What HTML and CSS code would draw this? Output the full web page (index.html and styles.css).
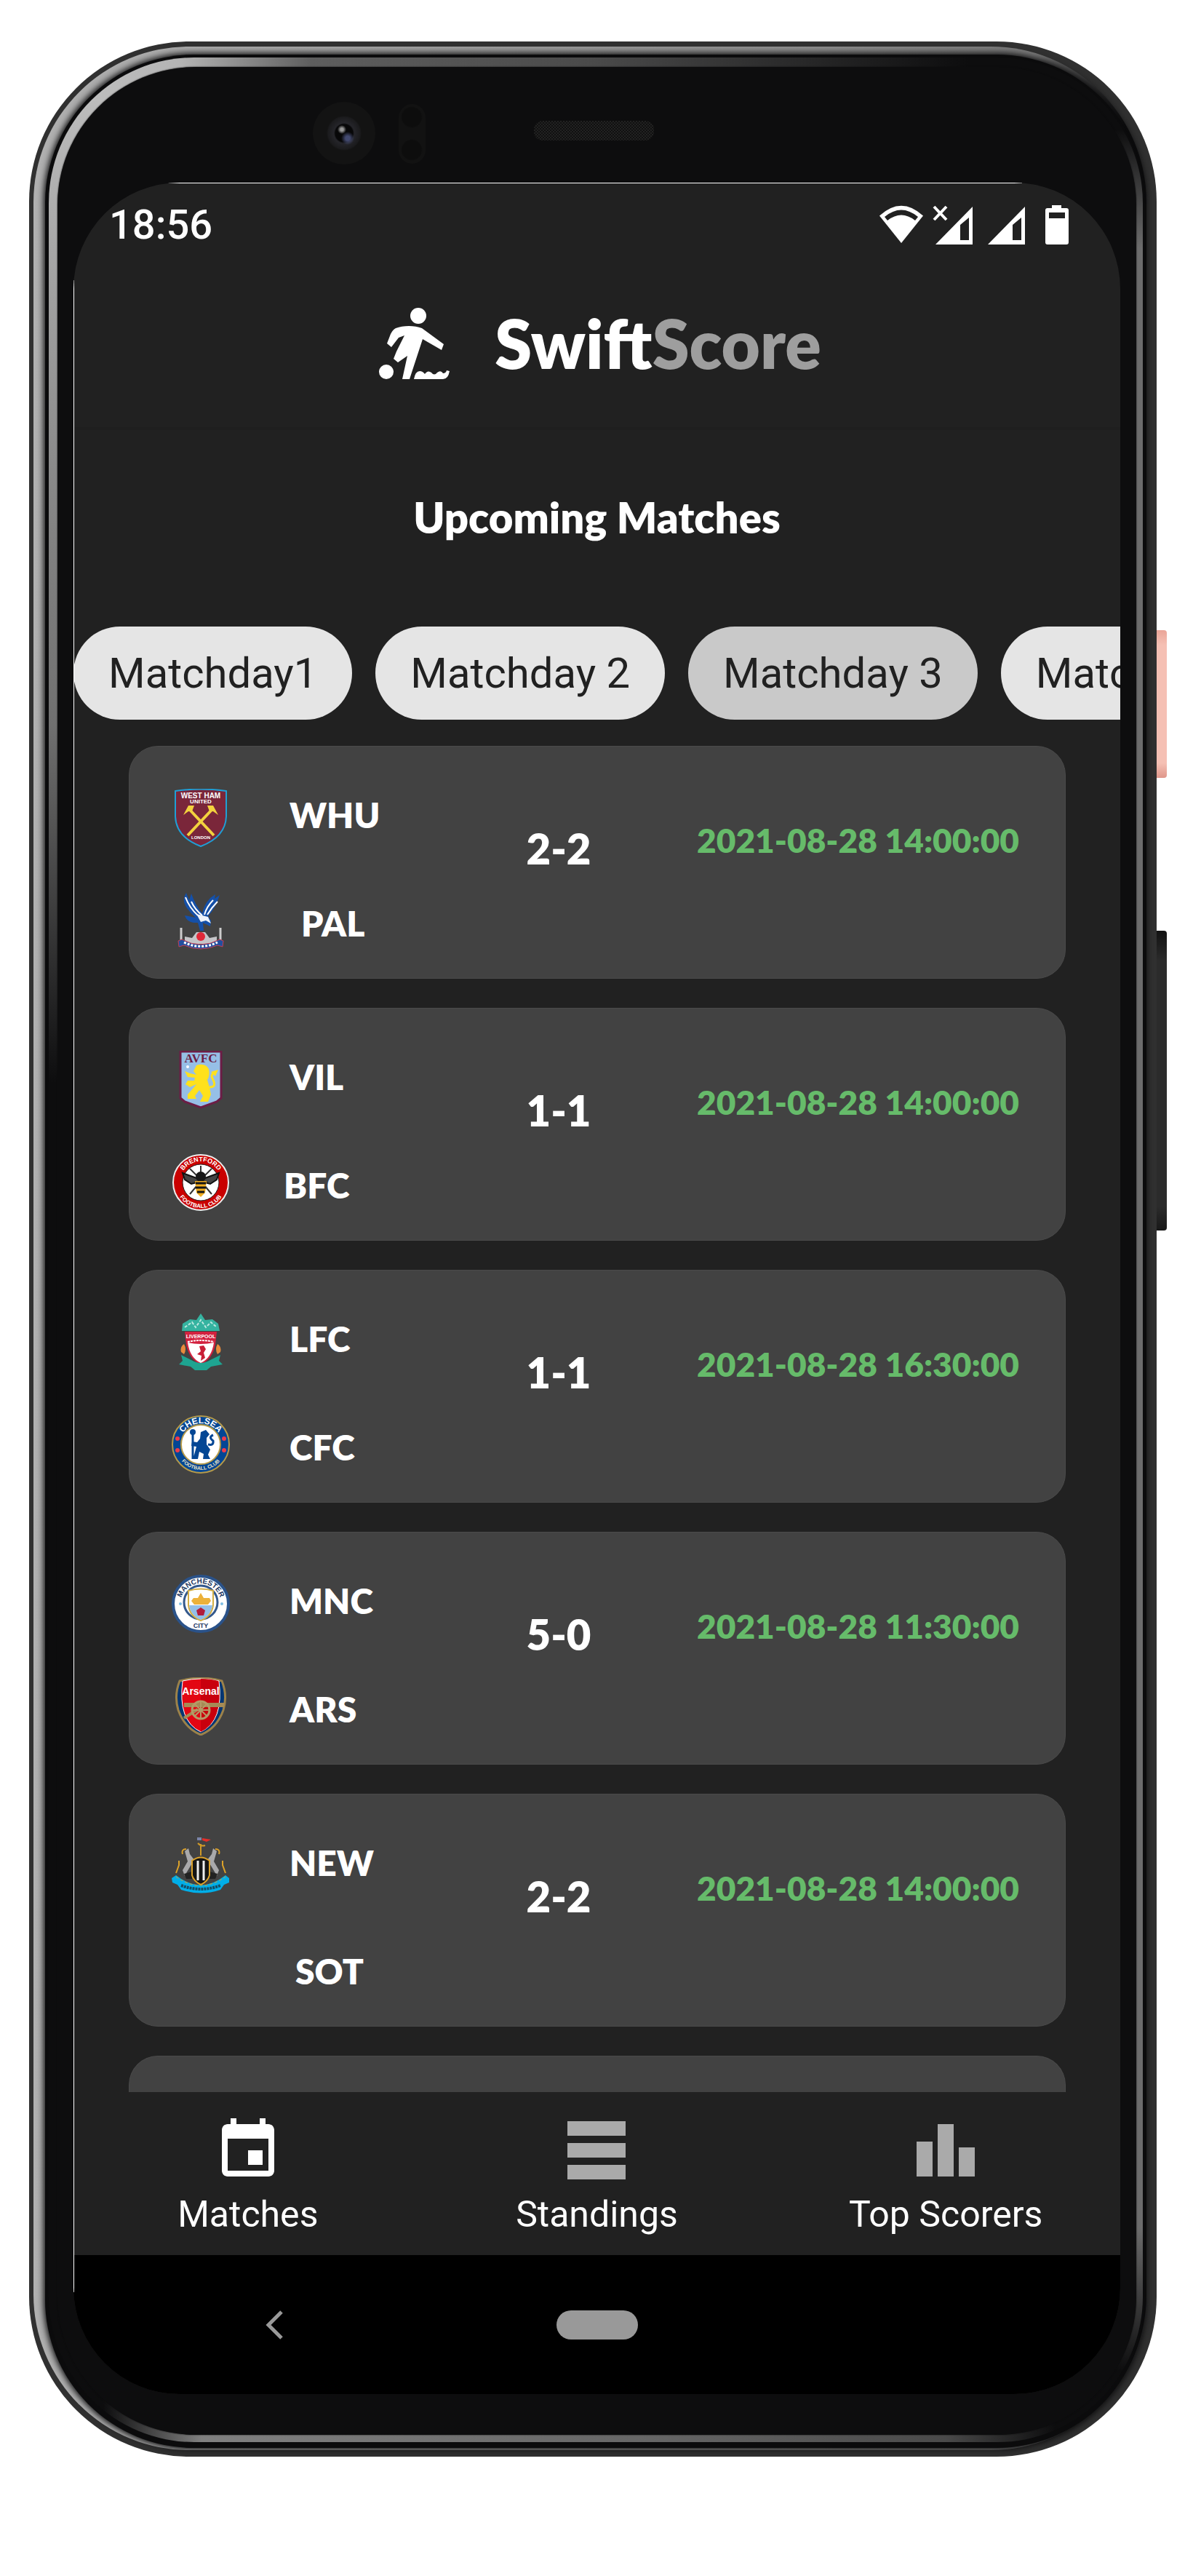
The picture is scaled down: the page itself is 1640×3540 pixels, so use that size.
FILE: index.html
```html
<!DOCTYPE html>
<html lang="en">
<head>
<meta charset="utf-8">
<title>SwiftScore</title>
<link rel="stylesheet" href="styles.css">
</head>
<body>
<div class="device">
  <span class="ring ring-rim"></span>
  <span class="ring ring-gap"></span>
  <span class="ring ring-shine"></span>
  <span class="ring ring-bezel"></span>
  <span class="side-button side-button-power"></span>
  <span class="side-button side-button-volume"></span>
  <span class="camera"></span>
  <span class="sensor"></span>
  <span class="speaker"></span>

  <div class="screen">
    <div class="status-bar">
      <span class="clock">18:56</span>
      <svg class="status-icons" width="260" height="54" viewBox="0 0 260 54" fill="#fff" aria-hidden="true">
        <path d="M0 14.500Q30-13 60 14.500L30 52Z"/>
        <path d="M7 16Q30-3 53 16L49 21Q30 6 11 21Z" fill="#212121"/>
        <path d="M75 2l17 18M92 2l-17 18" stroke="#fff" stroke-width="4"/>
        <path fill-rule="evenodd" d="M77 54L128 2v52ZM111 27v21h12V17Z"/>
        <path fill-rule="evenodd" d="M149 54L200 2v52ZM183 27v21h12V17Z"/>
        <path fill-rule="evenodd" d="M237 0h13v4h7q3 0 3 3v44q0 3-3 3h-26q-3 0-3-3V7q0-3 3-3h6ZM233 10v8h22v-8Z"/>
      </svg>
    </div>

    <header class="app-bar">
      <svg class="brand-icon" width="98" height="98" viewBox="0 0 98 98" fill="#fff" aria-hidden="true">
        <circle cx="55" cy="11" r="11"/>
        <circle cx="11" cy="88" r="10"/>
        <path d="M24 28Q32 25 42 25Q52 25 60 28L90 50L87 58L61 43L43 98H33L40 66L27 75L21 70L25 60L36 38L28 41L18 54L12 49L17 36Q20 30 24 28Z"/>
        <path d="M49 98q2-11 8-11 4 0 7 4 4-6 9-2 4 5 8 0 5-4 8 1 4 0 5-4l4 1q-2 11-9 11z"/>
      </svg>
      <h1 class="brand">Swift<span class="brand-dim">Score</span></h1>
    </header>

    <main>
      <h2 class="page-title">Upcoming Matches</h2>
      <div class="chips">
        <button class="chip" type="button">Matchday1</button>
        <button class="chip" type="button">Matchday 2</button>
        <button class="chip chip-selected" type="button">Matchday 3</button>
        <button class="chip" type="button">Matchday 4</button>
      </div>

      <div class="matches">
        <article class="match">
          <div class="teams">
            <div class="team">
              <svg class="crest" viewBox="0 0 80 80" aria-hidden="true">
                <path d="M5 3Q40-2 75 3V38Q74 66 40 79Q6 66 5 38Z" fill="#7a263a" stroke="#1f9fd6" stroke-width="2"/>
                <path d="M25 29L58 64M55 29L22 64" stroke="#f3d23e" stroke-width="4"/>
                <path d="M16 36L23 23H31L28 31L23 31ZM64 36L57 23H49L52 31L57 31Z" fill="#f3d23e"/>
                <text x="40" y="13" text-anchor="middle" class="crest-text" font-size="10" fill="#fff">WEST HAM</text>
                <text x="40" y="20" text-anchor="middle" class="crest-text" font-size="8" fill="#fff">UNITED</text>
                <text x="40" y="69" text-anchor="middle" class="crest-text" font-size="6" fill="#fff">LONDON</text>
              </svg>
              <span class="name">WHU</span>
            </div>
            <div class="team">
              <svg class="crest" viewBox="0 0 80 80" aria-hidden="true">
                <path d="M20 2Q13 12 21 23Q26 30 33 36L18 33Q20 41 30 43L36 43L39 54H44L43 43L53 48L54 40L50 34Q60 24 66 5L59 10L60 4Q46 12 42 30Q33 20 27 3L24 12Z" fill="#1550a8"/>
                <path d="M19 8Q24 22 36 33M27 14Q32 25 42 33M57 12Q48 21 45 32M63 14Q55 22 49 32" stroke="#fff" stroke-width="2" fill="none"/>
                <path d="M34 31L42 33L50 35L54 44L47 40L40 42Z" fill="#eef3fa"/>
                <path d="M13 50V68M67 50V68" stroke="#ccc" stroke-width="3"/>
                <path d="M18 62L28 64L34 56H46L52 64L62 62V72H18Z" fill="#c5c5c8"/>
                <circle cx="40" cy="62" r="6" fill="#e02838"/>
                <path d="M9 68L14 66Q40 80 66 66L71 68L70 76L63 74Q40 84 17 74L10 76Z" fill="#214f9f" stroke="#c53f57"/>
                <path d="M17 70Q40 81 63 70" fill="none" stroke="#fff" stroke-width="3" stroke-dasharray="3 2"/>
              </svg>
              <span class="name inset-3">PAL</span>
            </div>
          </div>
          <span class="score">2-2</span>
          <time class="kickoff" datetime="2021-08-28T14:00">2021-08-28 14:00:00</time>
        </article>

        <article class="match">
          <div class="teams">
            <div class="team">
              <svg class="crest" viewBox="0 0 80 80" aria-hidden="true">
                <path d="M12 1H68V65L62 70L40 78L18 70L12 65Z" fill="#96bfe6" stroke="#6c1d45" stroke-width="3"/>
                <text x="40" y="16" text-anchor="middle" class="crest-text crest-serif" font-size="17" fill="#6c1d45">AVFC</text>
                <circle cx="22" cy="22" r="2" fill="#fff"/>
                <path d="M34 20Q46 16 51 25Q53 34 49 40L52 50L54 60L50 70H39L43 62L38 54L32 62L34 66H22V60L29 52L34 46L25 50L19 46L22 41L31 41L32 37L22 36L18 28L25 31L34 33L30 28Z" fill="#ffe11c"/>
                <path d="M52 50Q62 50 57 40Q52 32 60 30" fill="none" stroke="#ffe11c" stroke-width="3"/>
                <path d="M54 29L64 26L60 35Z" fill="#ffe11c"/>
              </svg>
              <span class="name">VIL</span>
            </div>
            <div class="team">
              <svg class="crest" viewBox="0 0 80 80" aria-hidden="true">
                <defs><path id="brentford-top" d="M11 40a29 29 0 0 1 58 0"/><path id="brentford-bottom" d="M5 40a35 35 0 0 0 70 0"/></defs>
                <circle cx="40" cy="40" r="38" fill="#c90000" stroke="#eee" stroke-width="2"/>
                <circle cx="40" cy="40" r="25" fill="#fff" stroke="#222"/>
                <path d="M40 36L25 21M40 36L55 21M40 38L25 56M40 38L55 56M40 36V17" stroke="#333" stroke-width="2"/>
                <path d="M37 35L15 27L18 36L27 42L38 39ZM43 35L65 27L62 36L53 42L42 39Z" fill="#444" stroke="#111" stroke-width="2"/>
                <ellipse cx="40" cy="32" rx="7" ry="7" fill="#161616"/>
                <path d="M32 38H48L46 54L40 60L34 54Z" fill="#f0ad20"/>
                <path d="M33 41H47M33 47H47M35 53H45" stroke="#161616" stroke-width="3"/>
                <text class="crest-text" font-size="9" fill="#fff"><textPath href="#brentford-top" startOffset="50%" text-anchor="middle">BRENTFORD</textPath></text>
                <text class="crest-text" font-size="8" fill="#fff"><textPath href="#brentford-bottom" startOffset="50%" text-anchor="middle">FOOTBALL CLUB</textPath></text>
              </svg>
              <span class="name inset-0">BFC</span>
            </div>
          </div>
          <span class="score">1-1</span>
          <time class="kickoff" datetime="2021-08-28T14:00">2021-08-28 14:00:00</time>
        </article>

        <article class="match">
          <div class="teams">
            <div class="team">
              <svg class="crest" viewBox="0 0 80 80" aria-hidden="true">
                <path d="M14 25L15 15L25 9L34 10L40 1L46 10L56 9L64 15L66 25Z" fill="#35b3a0"/>
                <path d="M18 20L28 13L33 20L40 10L47 20L54 13L62 20" fill="none" stroke="#b9e7df" stroke-width="2" stroke-dasharray="4 2"/>
                <path d="M18 26H62L60 44Q56 64 40 71Q24 64 20 44Z" fill="#d3213f"/>
                <path d="M22 41Q40 45 58 41Q55 62 40 69Q25 62 22 41Z" fill="#fff"/>
                <path d="M38 46L44 45L47 50L44 55L46 62L40 66L41 59L35 57L40 53Z" fill="#c91f37"/>
                <path d="M22 40Q40 36 58 40" fill="none" stroke="#fff" stroke-width="2" stroke-dasharray="3 1"/>
                <text x="40" y="35" text-anchor="middle" class="crest-text" font-size="7" fill="#fff">LIVERPOOL</text>
                <path d="M13 54Q11 47 17 43Q21 50 17 57ZM67 54Q69 47 63 43Q59 50 63 57Z" fill="#e98a3c"/>
                <path d="M13 58L27 65Q40 73 53 65L67 58L65 66L70 71L54 74L48 79H32L26 74L10 71L15 66Z" fill="#1ea491"/>
              </svg>
              <span class="name">LFC</span>
            </div>
            <div class="team">
              <svg class="crest" viewBox="0 0 80 80" aria-hidden="true">
                <defs><path id="chelsea-top" d="M11 40a29 29 0 0 1 58 0"/><path id="chelsea-bottom" d="M5 40a35 35 0 0 0 70 0"/></defs>
                <circle cx="40" cy="40" r="39" fill="#034694" stroke="#b59a4a" stroke-width="2"/>
                <circle cx="40" cy="40" r="27" fill="#fff" stroke="#b59a4a" stroke-width="2"/>
                <path d="M40 23L47 20L52 26L48 31V40L53 47L50 54L53 60H43L44 53L38 50L36 60H28L31 54L34 43L27 42L28 36L35 37L39 32Z" fill="#034694"/>
                <path d="M29 22V60M50 40Q58 42 57 35Q50 30 57 27" stroke="#034694" stroke-width="3" fill="none"/>
                <circle cx="29" cy="23" r="4" fill="#034694"/>
                <circle cx="8" cy="32" r="3" fill="#ed3b4b"/><circle cx="72" cy="32" r="3" fill="#ed3b4b"/>
                <circle cx="8" cy="48" r="3" fill="#ed3b4b"/><circle cx="72" cy="48" r="3" fill="#ed3b4b"/>
                <text class="crest-text" font-size="12" fill="#fff"><textPath href="#chelsea-top" startOffset="50%" text-anchor="middle">CHELSEA</textPath></text>
                <text class="crest-text" font-size="7" fill="#e8e2c8"><textPath href="#chelsea-bottom" startOffset="50%" text-anchor="middle">FOOTBALL CLUB</textPath></text>
              </svg>
              <span class="name">CFC</span>
            </div>
          </div>
          <span class="score">1-1</span>
          <time class="kickoff" datetime="2021-08-28T16:30">2021-08-28 16:30:00</time>
        </article>

        <article class="match">
          <div class="teams">
            <div class="team">
              <svg class="crest" viewBox="0 0 80 80" aria-hidden="true">
                <defs><path id="city-top" d="M12 40a28 28 0 0 1 56 0"/></defs>
                <circle cx="40" cy="40" r="38" fill="#fff" stroke="#2a5289" stroke-width="4"/>
                <circle cx="40" cy="38" r="23" fill="#fff" stroke="#34598c" stroke-width="3"/>
                <path d="M23 22Q40 17 57 22V42Q55 57 40 63Q25 57 23 42Z" fill="#fff" stroke="#d3ae44" stroke-width="2"/>
                <path d="M24 42H56Q54 56 40 62Q26 56 24 42Z" fill="#93bfe8"/>
                <path d="M27 36L30 32H36L40 25L44 32H52L54 36L50 41H31Z" fill="#ecb13a"/>
                <path d="M40 45L46 49L44 56H36L34 49Z" fill="#b01c3c"/>
                <circle cx="12" cy="40" r="2" fill="#7ebfe5"/><circle cx="69" cy="40" r="2" fill="#7ebfe5"/>
                <text class="crest-text" font-size="10" fill="#1c3762"><textPath href="#city-top" startOffset="50%" text-anchor="middle">MANCHESTER</textPath></text>
                <text x="40" y="73" text-anchor="middle" class="crest-text" font-size="9" fill="#1c3762">CITY</text>
              </svg>
              <span class="name">MNC</span>
            </div>
            <div class="team">
              <svg class="crest" viewBox="0 0 80 80" aria-hidden="true">
                <path d="M11 5Q40-3 69 5Q77 25 71 45Q62 70 40 79Q18 70 9 45Q3 25 11 5Z" fill="#063672" stroke="#9c824a" stroke-width="3"/>
                <path d="M15 5Q40-1 65 5Q72 60 40 75Q8 60 15 5Z" fill="#e30613" stroke="#fff"/>
                <path d="M40 2Q54 2 64 5Q71 60 40 75Z" fill="#c9000d"/>
                <text x="40" y="24" text-anchor="middle" class="crest-text" font-size="14" fill="#fff">Arsenal</text>
                <path d="M17 35H72V41H17Z" fill="#a58b55"/>
                <path d="M17 56L36 44" stroke="#a58b55" stroke-width="4"/>
                <circle cx="40" cy="45" r="12" fill="none" stroke="#b59a66" stroke-width="3"/>
                <path d="M28 45H52M40 33V57M32 37L48 53M48 37L32 53" stroke="#b59a66" stroke-width="2"/>
              </svg>
              <span class="name">ARS</span>
            </div>
          </div>
          <span class="score">5-0</span>
          <time class="kickoff" datetime="2021-08-28T11:30">2021-08-28 11:30:00</time>
        </article>

        <article class="match">
          <div class="teams">
            <div class="team">
              <svg class="crest" viewBox="0 0 80 80" aria-hidden="true">
                <path d="M35 1H41V5H35Z" fill="#7a84a8"/><path d="M42 2L54 4L48 7L42 5Z" fill="#e22e2a"/>
                <path d="M40 10V26M36 9Q41 14 46 12" stroke="#d09a27" stroke-width="2" fill="none"/>
                <path d="M18 20L23 16L25 24L31 32L26 40L20 50L28 56L18 54L15 46L22 34ZM62 20L57 16L55 24L49 32L54 40L60 50L52 56L62 54L65 46L58 34Z" fill="#a9a9ab"/>
                <path d="M15 24Q13 17 20 17M65 24Q67 17 60 17M10 33V39L6 50M70 33V39L74 50" stroke="#dca22a" stroke-width="2" fill="none"/>
                <path d="M17 51L28 48V58L20 58ZM63 51L52 48V58L60 58Z" fill="#222"/>
                <path d="M28 33Q40 24 52 33V53Q50 61 40 66Q30 61 28 53Z" fill="#151515" stroke="#dca22a" stroke-width="2"/>
                <path d="M36 33V60M44 33V60" stroke="#eee" stroke-width="3"/>
                <path d="M0 57L6 53Q40 80 74 53L79 57V63L72 66L67 73Q40 82 13 73L8 66L1 63Z" fill="#00aee8"/>
                <path d="M13 67Q40 77 67 67" stroke="#144d64" stroke-width="4" stroke-dasharray="3 1" fill="none"/>
                <path d="M6 55Q40 79 74 55" stroke="#dca22a" stroke-dasharray="4 3" fill="none"/>
              </svg>
              <span class="name">NEW</span>
            </div>
            <div class="team">
              <span class="crest"></span>
              <span class="name inset-2">SOT</span>
            </div>
          </div>
          <span class="score">2-2</span>
          <time class="kickoff" datetime="2021-08-28T14:00">2021-08-28 14:00:00</time>
        </article>

        <div class="match-peek"></div>
      </div>
    </main>

    <nav class="tabs">
      <a class="tab tab-active" href="#matches">
        <svg class="tab-icon" viewBox="0 0 24 24" aria-hidden="true"><path d="M17 12h-5v5h5v-5zM16 1v2H8V1H6v2H5c-1.110 0-1.990.900-1.990 2L3 19c0 1.100.890 2 2 2h14c1.100 0 2-.900 2-2V5c0-1.100-.900-2-2-2h-1V1h-2zm3 18H5V8h14v11z"/></svg>
        Matches
      </a>
      <a class="tab" href="#standings">
        <svg class="tab-icon" viewBox="0 0 96 96" aria-hidden="true"><path d="M8 8h80v20H8zM8 38h80v20H8zM8 68h80v20H8z"/></svg>
        Standings
      </a>
      <a class="tab" href="#top-scorers">
        <svg class="tab-icon" viewBox="0 0 96 96" aria-hidden="true"><path d="M8 36h22v48H8zM37 12h22v72H37zM66 44h22v40H66z"/></svg>
        Top Scorers
      </a>
    </nav>

    <div class="system-bar">
      <button class="back" type="button" aria-label="Back">
        <svg width="24" height="40" viewBox="0 0 24 40" aria-hidden="true"><path d="M22 2L4 20L22 38" fill="none" stroke="#999" stroke-width="5"/></svg>
      </button>
      <button class="home" type="button" aria-label="Home"></button>
    </div>
  </div>
</div>
</body>
</html>
```
FILE: styles.css
```css
* {
  box-sizing: border-box;
}

body {
  margin: 0;
  padding: 57px 50px 164px 40px;
  background: #fff;
  color: #fff;
  font-family: Roboto, "Liberation Sans", sans-serif;
}

h1,
h2 {
  margin: 0;
}

button {
  border: 0;
  padding: 0;
  background: none;
  font: inherit;
}

/* Phone body */
.device {
  position: relative;
  padding: 194px 50px 86px 61px;
  border-radius: 220px;
  background: #303030;
}

.ring {
  position: absolute;
}

.ring-rim {
  inset: 7px 14px 9px 6px;
  border-radius: 214px;
  background: linear-gradient(to right, #b0b0b0 0, #8c8c8c 70%, #777 90%, #0c0c0d 98%);
}

.ring-gap {
  inset: 18px 16px 12px 22px;
  border-radius: 204px;
  background: #0b0b0c;
  box-shadow: 0 0 9px 2px #0b0b0c;
}

.ring-shine {
  inset: 22px 19px 20px 27px;
  border-radius: 200px;
  background:
    linear-gradient(to right, #c2c2c2 0, #b4b4b4 12%, #5e5e5e 24%, #4a4a4a 50%, #0d0d0e 84%) top / 100% 60px no-repeat,
    linear-gradient(to right, #0d0d0e 5%, #808080 14%, #666 55%, #4a4a4a 82%, #0d0d0e 92%) bottom / 100% 60px no-repeat,
    linear-gradient(to bottom, #c2c2c2 0, #a0a0a0 10%, #828282 20%, #707070 28%, #0d0d0e 43%) left / 50% 100% no-repeat,
    linear-gradient(to bottom, #0d0d0e 3%, #6c6c6c 8%, #6c6c6c 91%, #0d0d0e 97%) right / 50% 100% no-repeat;
}

.ring-bezel {
  inset: 35px 28px 30px 39px;
  border-radius: 190px;
  background: #0d0d0e;
  box-shadow: 0 0 2px #0d0d0e;
}

.side-button {
  position: absolute;
  left: 100%;
  width: 14px;
  border-radius: 0 4px 4px 0;
}

.side-button-power {
  top: 809px;
  height: 203px;
  background: linear-gradient(to bottom, #eaa598, #f5c0b4 10%, #f5c0b4 90%, #df968a);
}

.side-button-volume {
  top: 1222px;
  height: 412px;
  background: linear-gradient(to bottom, #121212, #2b2b2b 10%, #2b2b2b 92%, #181818);
}

.camera {
  position: absolute;
  top: 83px;
  left: 390px;
  width: 86px;
  height: 86px;
  border-radius: 50%;
  background:
    radial-gradient(circle at 40px 38px, #999 2px, transparent 6px),
    radial-gradient(circle at 48px 50px, #434a70 3px, transparent 9px),
    radial-gradient(circle at 43px 43px, #070708 12px, #25252a 14px, #1b1b1d 22px, #131313 24px);
}

.sensor {
  position: absolute;
  top: 86px;
  left: 508px;
  width: 37px;
  height: 82px;
  border-radius: 19px;
  background:
    radial-gradient(circle at 18px 18px, #0d0d0d 13px, transparent 15px),
    radial-gradient(circle at 18px 63px, #0d0d0d 13px, transparent 15px),
    #121212;
}

.speaker {
  position: absolute;
  top: 109px;
  left: 694px;
  width: 165px;
  height: 27px;
  border-radius: 12px;
  background: repeating-conic-gradient(#101010 0 25%, #222 0 50%) 0 0 / 4px 4px;
}

/* Screen */
.screen {
  position: relative;
  overflow: hidden;
  border-radius: 146px;
  background: #212121;
}

.screen::before,
.screen::after {
  content: "";
  position: absolute;
  background: #fff;
}

.screen::before {
  top: 0;
  left: 130px;
  right: 135px;
  height: 1px;
}

.screen::after {
  top: 134px;
  bottom: 140px;
  left: 0;
  width: 1px;
}

.status-bar {
  display: flex;
  align-items: center;
  justify-content: space-between;
  height: 96px;
  margin: 0 71px 0 49px;
  padding-top: 20px;
}

.clock {
  font-size: 56px;
  font-weight: 500;
  line-height: 64px;
}

.app-bar {
  display: flex;
  align-items: center;
  justify-content: center;
  gap: 62px;
  height: 244px;
  padding: 10px 0 0 8px;
  border-bottom: 4px solid #1f1f1f;
}

.brand {
  font-family: Lato, sans-serif;
  font-size: 92px;
  font-weight: 800;
  line-height: 112px;
}

.brand-dim {
  color: #9e9e9e;
}

.page-title {
  padding: 88px 0 118px;
  font-family: Lato, sans-serif;
  font-size: 58px;
  font-weight: 800;
  line-height: 64px;
  text-align: center;
}

.chips {
  display: flex;
  gap: 32px;
  overflow: hidden;
}

.chip {
  flex: none;
  height: 128px;
  padding: 0 48px;
  border-radius: 64px;
  background: #e5e5e5;
  color: #212121;
  font-size: 58px;
  line-height: 64px;
}

.chip-selected {
  background: #c9c9c9;
}

/* Match list */
.matches {
  display: grid;
  gap: 40px;
  padding: 36px 75px 0 76px;
}

.match,
.match-peek {
  border: 1px solid #4a4a4a;
  background: #424242;
}

.match {
  display: grid;
  grid-template-columns: 420px 224px 1fr;
  align-items: start;
  height: 320px;
  padding: 58px 63px 0 58px;
  border-radius: 40px;
}

.match-peek {
  height: 50px;
  border-bottom: 0;
  border-radius: 40px 40px 0 0;
}

.teams {
  display: grid;
  gap: 61px;
}

.team {
  display: flex;
  gap: 74px;
}

.crest {
  flex: none;
  width: 80px;
  height: 80px;
}

.crest-text {
  font-family: "Liberation Sans", sans-serif;
  font-weight: 700;
}

.crest-serif {
  font-family: "Liberation Serif", serif;
}

.name,
.score,
.kickoff {
  font-family: Lato, sans-serif;
  font-weight: 800;
}

.name {
  padding: 8px 0 0 8px;
  font-size: 48px;
  line-height: 56px;
}

.team:last-child .name {
  padding-top: 16px;
}

.inset-0 {
  padding-left: 0;
}

.inset-2 {
  padding-left: 16px;
}

.inset-3 {
  padding-left: 24px;
}

.score {
  padding-top: 50px;
  font-size: 58px;
  line-height: 64px;
  text-align: center;
}

.kickoff {
  padding-top: 43px;
  color: #66bb6a;
  font-size: 46px;
  line-height: 56px;
  text-align: right;
  white-space: nowrap;
}

/* Bottom navigation */
.tabs {
  display: grid;
  grid-template-columns: repeat(3, 1fr);
  height: 224px;
}

.tab {
  display: flex;
  flex-direction: column;
  align-items: center;
  gap: 12px;
  padding-top: 32px;
  color: #fff;
  font-size: 50px;
  line-height: 56px;
  text-decoration: none;
}

.tab-icon {
  width: 96px;
  height: 96px;
  fill: #aaa;
}

.tab-active .tab-icon {
  fill: #fff;
}

.system-bar {
  display: grid;
  grid-template-columns: 1fr auto 1fr;
  align-items: center;
  height: 191px;
  background: #000;
}

.back {
  justify-self: center;
  display: flex;
  margin-right: 112px;
}

.home {
  width: 112px;
  height: 40px;
  border-radius: 20px;
  background: #999;
}
```
